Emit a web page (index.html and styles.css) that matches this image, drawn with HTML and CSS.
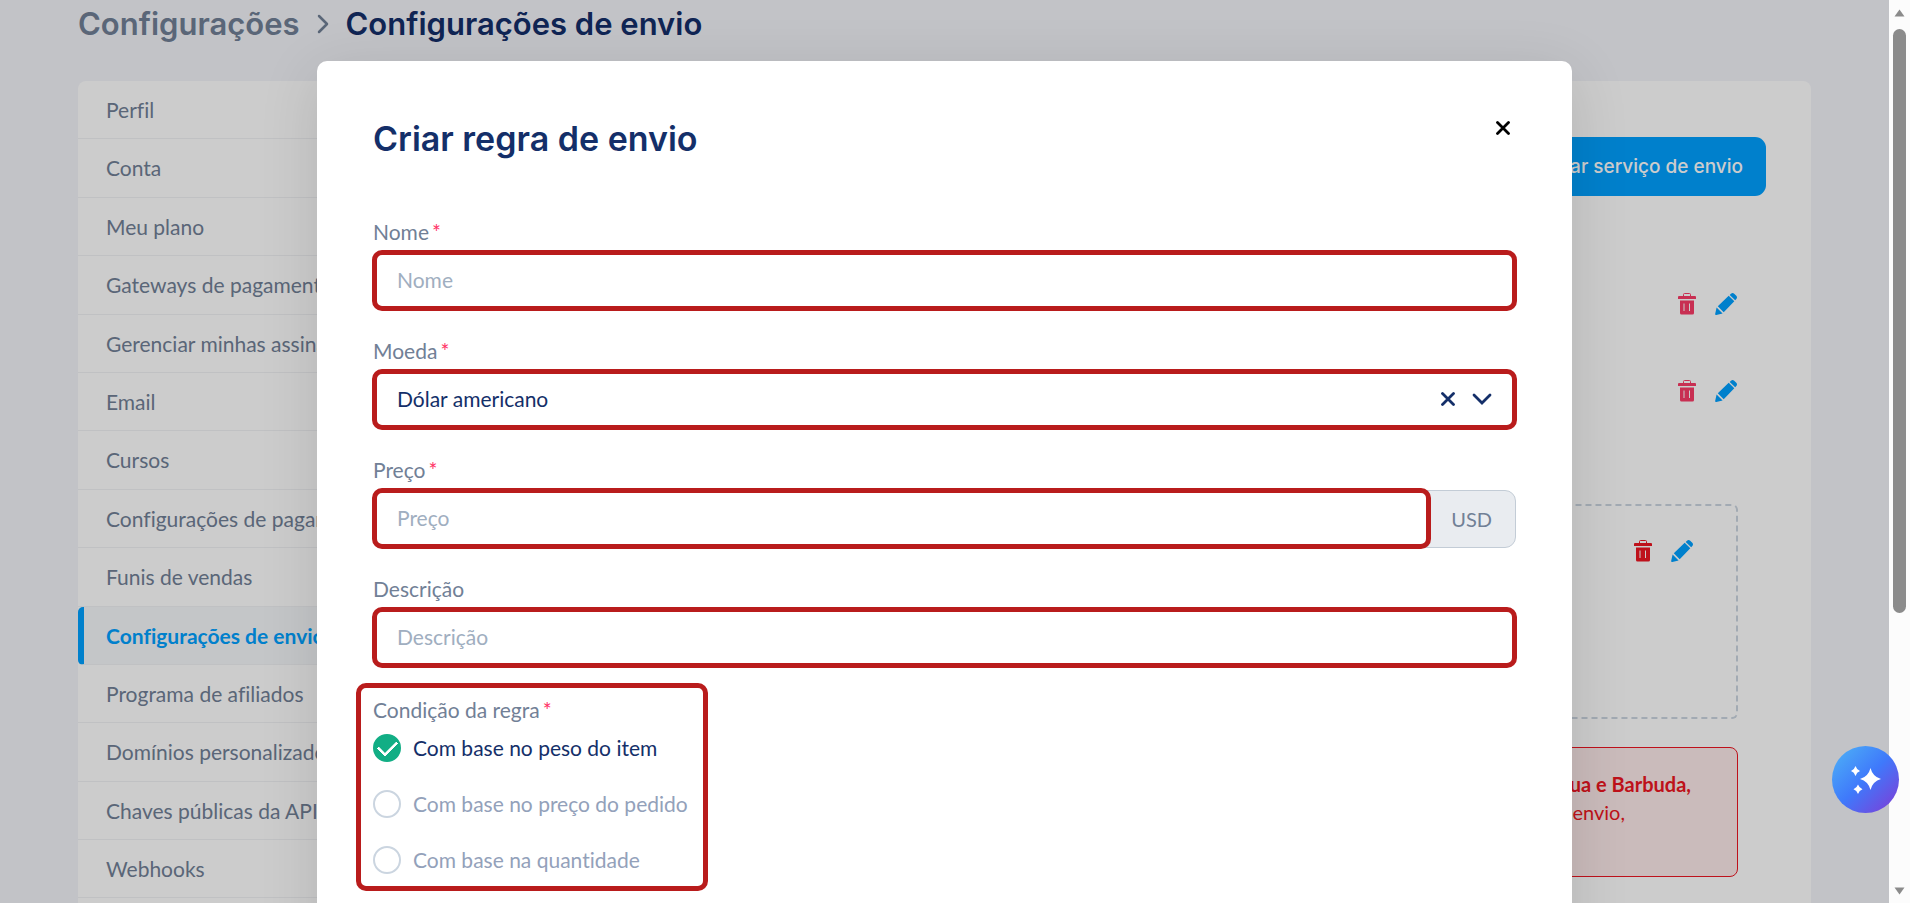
FILE: index.html
```html
<!DOCTYPE html>
<html lang="pt-BR">
<head>
<meta charset="utf-8">
<title>Configurações de envio</title>
<link rel="stylesheet" href="styles.css">
</head>
<body>
<svg class="sprite" aria-hidden="true">
  <symbol id="i-trash" viewBox="0 0 18 22"><path fill="currentColor" fill-rule="evenodd" d="M1 3h16a1 1 0 0 1 1 1v2H0V4a1 1 0 0 1 1-1zM2 7.500h14V20a1.500 1.500 0 0 1-1.500 1.500h-11A1.500 1.500 0 0 1 2 20zM5.500 10.500v7.500h1v-7.500zM11 10.500v7.500h1v-7.500z"/><path fill="none" stroke="currentColor" d="M5.500 3V1.500a1 1 0 0 1 1-1h5a1 1 0 0 1 1 1V3"/></symbol>
  <symbol id="i-pencil" viewBox="0 0 22 22"><path fill="currentColor" d="M1.600 14.400l6 6-6.300 1.500Q0 22.200.2 20.800zM2.800 13.300L13.700 2.700l5.600 5.600L8.700 19.200zM14.700 1.900L16 .7q1.600-1.400 3.200 0l2.100 2.100q1.400 1.600 0 3.200L20.200 7.300z"/></symbol>
  <symbol id="i-x" viewBox="0 0 14 14"><path fill="none" stroke="currentColor" stroke-width="2.800" stroke-linecap="round" d="M1.500 1.500l11 11M12.500 1.500l-11 11"/></symbol>
</svg>
<div class="app">
  <div class="page">
    <nav class="crumbs" aria-label="Navegação">
      <a href="#">Configurações</a>
      <svg width="12" height="20" viewBox="0 0 12 20"><path d="M2 2l8 8-8 8" fill="none" stroke="currentColor" stroke-width="2.500" stroke-linecap="round" stroke-linejoin="round"/></svg>
      <h1>Configurações de envio</h1>
    </nav>
    <div class="card">
      <nav class="side" aria-label="Configurações">
        <a href="#">Perfil</a>
        <a href="#">Conta</a>
        <a href="#">Meu plano</a>
        <a href="#">Gateways de pagamento</a>
        <a href="#">Gerenciar minhas assinaturas</a>
        <a href="#">Email</a>
        <a href="#">Cursos</a>
        <a href="#">Configurações de pagamento</a>
        <a href="#">Funis de vendas</a>
        <a href="#" class="active">Configurações de envio</a>
        <a href="#">Programa de afiliados</a>
        <a href="#">Domínios personalizados</a>
        <a href="#">Chaves públicas da API</a>
        <a href="#">Webhooks</a>
      </nav>
      <main class="content">
        <button class="primary">Criar serviço de envio</button>
        <div class="services">
          <div class="row"><button class="icon pink" aria-label="Excluir"><svg width="18" height="22"><use href="#i-trash"/></svg></button><button class="icon blue" aria-label="Editar"><svg width="22" height="22"><use href="#i-pencil"/></svg></button></div>
          <div class="row"><button class="icon pink" aria-label="Excluir"><svg width="18" height="22"><use href="#i-trash"/></svg></button><button class="icon blue" aria-label="Editar"><svg width="22" height="22"><use href="#i-pencil"/></svg></button></div>
          <div class="zone"><button class="icon red" aria-label="Excluir"><svg width="18" height="22"><use href="#i-trash"/></svg></button><button class="icon blue" aria-label="Editar"><svg width="22" height="22"><use href="#i-pencil"/></svg></button></div>
          <div class="alert"><strong>Antígua e Barbuda,</strong><span>envio,</span></div>
        </div>
      </main>
    </div>
    <div class="overlay">
      <form class="modal" role="dialog" aria-labelledby="title">
        <header>
          <h2 id="title">Criar regra de envio</h2>
          <button type="button" class="icon close" aria-label="Fechar"><svg width="14" height="14"><use href="#i-x"/></svg></button>
        </header>
        <div class="field">
          <label for="nome">Nome<span class="req">*</span></label>
          <input class="control" id="nome" placeholder="Nome">
        </div>
        <div class="field">
          <label for="moeda">Moeda<span class="req">*</span></label>
          <div class="control picker">
            <select id="moeda"><option>Dólar americano</option></select>
            <button type="button" class="icon" aria-label="Limpar"><svg width="14" height="14"><use href="#i-x"/></svg></button>
            <svg width="20" height="12" viewBox="0 0 20 12"><path d="M2 2l8 8 8-8" fill="none" stroke="currentColor" stroke-width="2.800" stroke-linecap="round"/></svg>
          </div>
        </div>
        <div class="field">
          <label for="preco">Preço<span class="req">*</span></label>
          <div class="group">
            <input class="control" id="preco" placeholder="Preço">
            <span class="unit">USD</span>
          </div>
        </div>
        <div class="field">
          <label for="desc">Descrição</label>
          <input class="control" id="desc" placeholder="Descrição">
        </div>
        <div class="rules" role="radiogroup" aria-labelledby="cond">
          <div class="legend" id="cond">Condição da regra<span class="req">*</span></div>
          <label><input type="radio" name="r" checked><span>Com base no peso do item</span></label>
          <label><input type="radio" name="r"><span>Com base no preço do pedido</span></label>
          <label><input type="radio" name="r"><span>Com base na quantidade</span></label>
        </div>
      </form>
    </div>
  </div>
  <div class="scroll" aria-hidden="true">
    <svg width="11" height="8" viewBox="0 0 11 8"><path d="M5.500 0.500l5 7h-10z"/></svg>
    <div class="track"><div class="thumb"></div></div>
    <svg width="11" height="8" viewBox="0 0 11 8"><path d="M5.500 7.500l5-7h-10z"/></svg>
  </div>
  <button class="assistant" aria-label="Assistente">
    <svg width="30" height="28" viewBox="0 0 30 28"><path fill="#fff" d="M19.500 2q2.200 8.800 10.500 11-8.300 2.200-10.500 11Q17.300 15.200 9 13q8.300-2.200 10.500-11zM4.500 0q1.200 3.800 4.500 5-3.300 1.200-4.500 5Q3.300 6.200 0 5q3.300-1.200 4.500-5zM7 18.500q1.200 3.500 4.500 4.700Q8.200 24.500 7 28q-1.200-3.500-4.500-4.800Q5.800 22 7 18.500z"/></svg>
  </button>
</div>
</body>
</html>
```
FILE: styles.css
```css
* { box-sizing: border-box; }

body {
  margin: 0;
  font-family: Lato, "Noto Sans", sans-serif;
  font-size: 21px;
  font-variant-ligatures: none;
  color: #718096;
}

h1, h2 { margin: 0; font-family: Inter, sans-serif; font-weight: 600; color: #142f69; }
a { color: inherit; text-decoration: none; }
button, input, select { font: inherit; color: inherit; }

.sprite { position: absolute; width: 0; height: 0; }

.app { display: flex; height: 100vh; overflow: hidden; background: #f3f4f9; }
.page { position: relative; flex: 1; min-width: 0; padding: 0 78px; overflow: hidden; }

.crumbs { display: flex; align-items: center; gap: 17px; height: 81px; padding-bottom: 33px; font: 600 31px/48px Inter, sans-serif; }
.crumbs h1 { font-size: 31px; }

.card { display: grid; grid-template-columns: 1fr 3fr; background: #fff; border-radius: 8px; }

.side { display: flex; flex-direction: column; padding-bottom: 60px; line-height: 1.4; white-space: nowrap; overflow: hidden; }
.side a { padding: 14px 28px; border-bottom: 1px solid #f0f2f4; }
.side .active { padding-left: 22px; border-left: 6px solid #00a0ff; border-radius: 5px 0 0 5px; background: #f6f8fb; color: #00a0ff; font-weight: 700; }

.content { display: flex; flex-direction: column; align-items: stretch; padding: 56px 45px 0 0; }
.primary { align-self: flex-end; height: 59px; padding: 0 23px; border: 0; border-radius: 11px; background: #00a0ff; color: #fff; font: 500 19px Inter, sans-serif; }

.icon { display: flex; padding: 0; border: 0; background: none; cursor: pointer; }
.pink { color: #fb3b67; }
.red { color: #ee1622; }
.blue { color: #00a0ff; }

.services { display: flex; flex-direction: column; padding: 65px 28px 0 0; }
.row { display: flex; justify-content: flex-end; gap: 19px; height: 87px; padding: 32px 1px 0 0; }
.zone { display: flex; justify-content: flex-end; align-items: flex-start; gap: 19px; height: 215px; margin-top: 69px; padding: 34px 43px; border: 2px dashed #cbd5e0; border-radius: 6px; }
.alert { display: flex; flex-direction: column; align-items: flex-end; height: 130px; margin-top: 28px; padding: 22px 46px; border: 1px solid #ee1622; border-radius: 8px; background: #fdeaea; color: #ee1622; font-size: 20px; line-height: 28px; }
.alert span { padding-right: 66px; }

.overlay { position: absolute; inset: 0; padding-top: 61px; background: rgba(0, 0, 0, .2); }
.modal { width: 100%; max-width: 1255px; min-height: 1100px; margin: 0 auto; padding: 55px; border-radius: 10px; background: #fff; box-shadow: 0 12px 60px rgba(0, 0, 0, .12); }
.modal header { display: flex; justify-content: space-between; padding: 0 7px 55px 1px; }
.modal h2 { font-size: 34px; line-height: 46px; }
.close { align-self: flex-start; margin-top: 5px; color: #000; }

.field { margin-bottom: 25px; }
.field > label, .legend { display: block; padding-left: 1px; margin-bottom: 3px; line-height: 30px; }
.req { margin-left: 3px; color: #ff3366; line-height: 0; }

.control { display: block; width: 100%; height: 61px; padding: 0 20px 2px; border: 5px solid #b91c1c; border-radius: 10px; background: #fff; color: #142f69; }
.control::placeholder { color: #a0aec0; opacity: 1; }
.picker { display: flex; align-items: center; gap: 17px; }
.picker select { flex: 1; padding: 0; border: 0; appearance: none; background: none; outline: 0; }

.group { display: flex; align-items: center; padding-right: 1px; }
.group .control { position: relative; z-index: 1; flex: 1; }
.unit { height: 58px; padding: 0 23px 0 25px; margin-left: -6px; border: 1px solid #c3ccd6; border-radius: 0 11px 11px 0; background: #e9ecf0; font-size: 20px; line-height: 56px; }

.rules { display: flex; flex-direction: column; width: max-content; margin: -10px 0 0 -16px; padding: 7px 15px 12px 12px; border: 5px solid #b91c1c; border-radius: 10px; }
.rules .legend { padding-left: 0; margin-bottom: 9px; }
.rules label { display: flex; align-items: center; gap: 12px; height: 28px; margin-bottom: 28px; color: #93a1ba; line-height: 26px; }
.rules label:last-child { margin-bottom: 0; }
.rules label:has(:checked) { color: #142f69; }
.rules input { display: grid; place-content: center; width: 28px; height: 28px; margin: 0; border: 2px solid #cbd5e0; border-radius: 50%; appearance: none; }
.rules input:checked { border-color: #12ae85; background: #12ae85; }
.rules input:checked::before { content: ""; width: 16px; height: 9px; margin-bottom: 4px; border: solid #fff; border-width: 0 0 3px 3px; border-radius: 1px; transform: rotate(-45deg); }

.scroll { display: flex; flex-direction: column; align-items: center; width: 21px; padding: 9px 0 8px; background: #fcfcfc; fill: #8b8b8b; }
.track { flex: 1; padding: 12px 0; }
.thumb { width: 13px; height: 69%; border-radius: 7px; background: #8b8b8b; }

.assistant { position: absolute; right: 11px; bottom: 90px; display: grid; place-content: center; width: 67px; height: 67px; padding: 0; border: 0; border-radius: 50%; background: linear-gradient(135deg, #4ba9f7 10%, #3f79fb 50%, #7c3fd8 95%); }
```
